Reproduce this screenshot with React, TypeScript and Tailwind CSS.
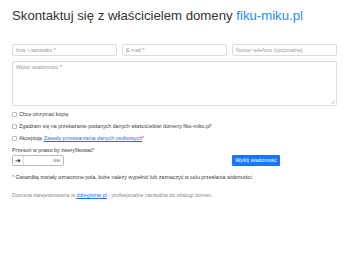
export default function App() {
  const small = "text-[5.3px] leading-[7px]";
  return (
    <div className="w-[350px] h-[280px] bg-white font-['Liberation_Sans',Arial,sans-serif] text-[#333]">
      <div className="px-3 pt-[7px]">
        <h1 className="text-[13.2px] leading-[18px] text-[#333] whitespace-nowrap">
          Skontaktuj się z właścicielem domeny <span className="text-[#1a8cff]">fiku-miku.pl</span>
        </h1>

        <div className="mt-[19px] grid grid-cols-3 gap-[5px] w-[325px]">
          {["Imię i nazwisko *", "E-mail *", "Numer telefonu (opcjonalne)"].map((p) => (
            <div key={p} className={`h-[12px] border border-[#dcdcdc] rounded-[2px] px-[3px] flex items-center text-[#999] ${small}`}>
              {p}
            </div>
          ))}
        </div>

        <div className={`mt-[5px] w-[325px] h-[45px] border border-[#dcdcdc] rounded-[2px] px-[3px] pt-[2px] text-[#999] relative ${small}`}>
          Wpisz wiadomość *
          <svg className="absolute right-[1px] bottom-[1px]" width="4" height="4" viewBox="0 0 4 4">
            <path d="M4 0L0 4M4 2L2 4" stroke="#aaa" strokeWidth="0.6" />
          </svg>
        </div>

        <div className={`mt-[5px] flex flex-col gap-[5px] text-[#3a3a3a] ${small}`}>
          <label className="flex items-center gap-[2px]">
            <span className="w-[5px] h-[5px] border border-[#bbb] rounded-[1px]" />
            Chcę otrzymać kopię
          </label>
          <label className="flex items-center gap-[2px]">
            <span className="w-[5px] h-[5px] border border-[#bbb] rounded-[1px]" />
            <span>
              Zgadzam się na przekazanie podanych danych właścicielowi domeny fiku-miku.pl<span className="text-[#e53935]">*</span>
            </span>
          </label>
          <label className="flex items-center gap-[2px]">
            <span className="w-[5px] h-[5px] border border-[#bbb] rounded-[1px]" />
            <span>
              Akceptuję <span className="text-[#1a73e8] underline">Zasady przetwarzania danych osobowych</span>
              <span className="text-[#e53935]">*</span>
            </span>
          </label>
        </div>

        <div className="mt-[5px] grid grid-cols-3 gap-[5px] w-[325px] items-end">
          <div>
            <div className={`text-[#3a3a3a] whitespace-nowrap ${small}`}>
              Przesuń w prawo by zweryfikować<span className="text-[#e53935]">*</span>
            </div>
            <div className="mt-[1px] w-[52px] h-[11px] border border-[#bbb] rounded-[2px] flex items-center">
              <div className="w-[11px] h-full border-r border-[#ddd] flex items-center justify-center text-[7px] leading-none text-[#222]">➜</div>
              <div className="flex-1 text-right pr-[3px] text-[#666] text-[4px]">NIE</div>
            </div>
          </div>
          <div />
          <button className={`justify-self-start h-[11px] w-[48px] bg-[#1877f2] text-white rounded-[1px] ${small}`}>
            Wyślij wiadomość
          </button>
        </div>

        <p className={`mt-[8px] text-[#3a3a3a] ${small}`}>
          <span className="text-[#e53935]">*</span> Gwiazdką zostały oznaczone pola, które należy wypełnić lub zaznaczyć w celu przesłania widomości.
        </p>

        <p className={`mt-[11px] text-[#888] ${small}`}>
          Domena zarejestrowana w <span className="text-[#1a73e8] underline">ddregistrar.pl</span> - profesjonalne narzędzia do obsługi domen.
        </p>
      </div>
    </div>
  );
}
